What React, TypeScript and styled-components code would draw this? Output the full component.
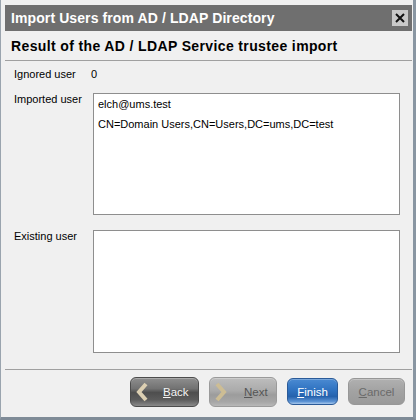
import styled, { createGlobalStyle } from "styled-components";

const GlobalStyle = createGlobalStyle`
    html, body {
        margin: 0;
        padding: 0;
        background: #f0f0f0;
    }
    body {
        font-family: "Liberation Sans", Arial, sans-serif;
    }
    *, *::before, *::after {
        box-sizing: border-box;
    }
`;

type ButtonKind = "dark" | "disabled" | "primary" | "muted";

const Window = styled.div`
    width: 416px;
    height: 420px;
    display: flex;
    flex-direction: column;
    background: #f0f0f0;
    border-left: 1px solid #9aa4ae;
    border-right: 3px solid #8996a2;
    border-bottom: 3px solid #7f8b97;
    padding: 5px 1px 0 4px;
`;

const TitleBar = styled.div`
    height: 26px;
    flex: none;
    display: flex;
    align-items: center;
    justify-content: space-between;
    background: #6f6f6f;
    padding: 0 4px 0 6px;
`;

const TitleText = styled.span`
    color: #ffffff;
    font-weight: bold;
    font-size: 14px;
    letter-spacing: 0.1px;
`;

const CloseButton = styled.div`
    width: 16px;
    height: 16px;
    background: #c9c9c9;
    display: flex;
    align-items: center;
    justify-content: center;
`;

const Heading = styled.div`
    height: 30px;
    flex: none;
    display: flex;
    align-items: center;
    padding: 0 0 0 6px;
    font-weight: bold;
    font-size: 14px;
    letter-spacing: 0.37px;
    color: #000;
    border-bottom: 1px solid #a0a0a0;
`;

const Content = styled.div`
    flex: 1;
    display: grid;
    grid-template-columns: 77px 1fr;
    grid-template-rows: 16px 122px 127px;
    row-gap: 11px;
    padding: 5px 12px 0 9px;
    font-size: 11px;
    color: #000;
    border-bottom: 1px solid #a0a0a0;
`;

const Label = styled.div<{ $offset?: number }>`
    line-height: 13px;
    margin-top: ${(p) => p.$offset ?? 0}px;
`;

const Value = styled.div`
    line-height: 16px;
`;

const ListBox = styled.div<{ $gap?: number }>`
    margin-left: 2px;
    margin-top: ${(p) => p.$gap ?? 0}px;
    background: #ffffff;
    border: 1px solid #8e8e8e;
    padding: 0 4px;
    font-size: 11px;
    line-height: 20px;
`;

const Footer = styled.div`
    height: 47px;
    flex: none;
    display: flex;
    justify-content: flex-end;
    align-items: flex-start;
    gap: 10px;
    padding: 7px 7px 0 0;
`;

const backgrounds: Record<ButtonKind, string> = {
    dark: "linear-gradient(#8e8e8e 0%, #727272 38%, #4e4e4e 52%, #5c5c5c 78%, #8a8a8a 100%)",
    disabled: "linear-gradient(#bdbdbd 0%, #ababab 45%, #9c9c9c 60%, #a6a6a6 85%, #b8b8b8 100%)",
    primary: "linear-gradient(#4a8ad2 0%, #2f72c0 45%, #2562ad 70%, #5c93d4 90%, #a8c8ec 100%)",
    muted: "linear-gradient(#b0b0b0 0%, #a2a2a2 50%, #9a9a9a 100%)",
};

const borders: Record<ButtonKind, string> = {
    dark: "#4c4c4c",
    disabled: "#9a9a9a",
    primary: "#2a5a98",
    muted: "#979797",
};

const textColors: Record<ButtonKind, string> = {
    dark: "#f4f4f4",
    disabled: "#555555",
    primary: "#ffffff",
    muted: "#6a6a6a",
};

const WizardButton = styled.div<{ $kind: ButtonKind; $width: number; $tall?: boolean }>`
    width: ${(p) => p.$width}px;
    height: ${(p) => (p.$tall ? 30 : 27)}px;
    margin-top: ${(p) => (p.$tall ? 0 : 1)}px;
    border: 1px solid ${(p) => borders[p.$kind]};
    border-radius: 6px;
    background: ${(p) => backgrounds[p.$kind]};
    color: ${(p) => textColors[p.$kind]};
    font-size: 11.5px;
    display: flex;
    align-items: center;
    justify-content: ${(p) => (p.$tall ? "flex-start" : "center")};
    padding: ${(p) => (p.$tall ? "0 0 0 4px" : "0")};
    box-shadow: inset 0 1px 0 rgba(255, 255, 255, 0.25);
`;

const ButtonLabel = styled.span<{ $shift?: number }>`
    margin-left: ${(p) => p.$shift ?? 0}px;
    & u {
        text-decoration: underline;
    }
`;

const Chevron = ({ dir, color }: { dir: "left" | "right"; color: string }) => (
    <svg width="14" height="20" viewBox="0 0 14 20">
        <polyline
            points={dir === "left" ? "11,2 4,10 11,18" : "3,2 10,10 3,18"}
            fill="none"
            stroke={color}
            strokeWidth="4"
            strokeLinejoin="miter"
        />
    </svg>
);

const App = () => {
    return (
        <>
            <GlobalStyle />
            <Window>
                <TitleBar>
                    <TitleText>Import Users from AD / LDAP Directory</TitleText>
                    <CloseButton>
                        <svg width="10" height="10" viewBox="0 0 10 10">
                            <path d="M1 1 L9 9 M9 1 L1 9" stroke="#111" strokeWidth="2" />
                        </svg>
                    </CloseButton>
                </TitleBar>
                <Heading>Result of the AD / LDAP Service trustee import</Heading>
                <Content>
                    <Label $offset={2}>Ignored user</Label>
                    <Value>0</Value>
                    <Label>Imported user</Label>
                    <ListBox>
                        <div>elch@ums.test</div>
                        <div>CN=Domain Users,CN=Users,DC=ums,DC=test</div>
                    </ListBox>
                    <Label $offset={4}>Existing user</Label>
                    <ListBox $gap={4} />
                </Content>
                <Footer>
                    <WizardButton $kind="dark" $width={69} $tall>
                        <Chevron dir="left" color="#dccfb2" />
                        <ButtonLabel $shift={14}><u>B</u>ack</ButtonLabel>
                    </WizardButton>
                    <WizardButton $kind="disabled" $width={68} $tall>
                        <Chevron dir="right" color="#cdbd94" />
                        <ButtonLabel $shift={16}><u>N</u>ext</ButtonLabel>
                    </WizardButton>
                    <WizardButton $kind="primary" $width={51}>
                        <ButtonLabel><u>F</u>inish</ButtonLabel>
                    </WizardButton>
                    <WizardButton $kind="muted" $width={57}>
                        <ButtonLabel><u>C</u>ancel</ButtonLabel>
                    </WizardButton>
                </Footer>
            </Window>
        </>
    );
};

export default App;
